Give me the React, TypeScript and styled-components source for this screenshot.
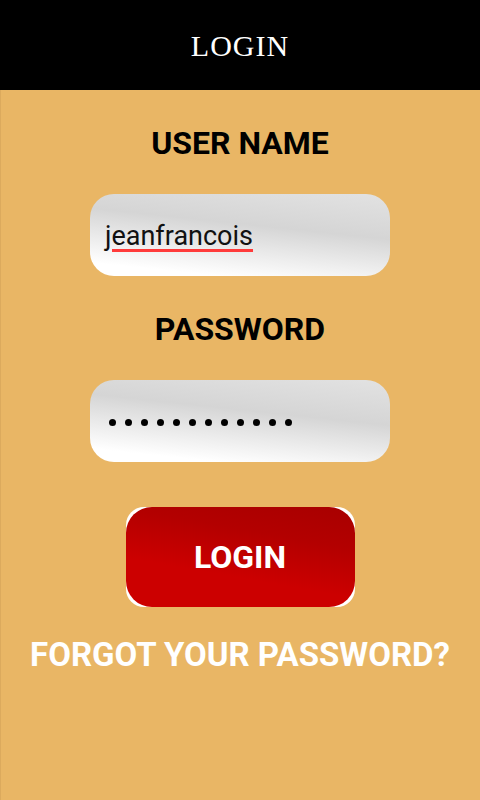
import React from "react";
import styled, { createGlobalStyle } from "styled-components";

const Global = createGlobalStyle`
  html, body { margin: 0; padding: 0; background: #e9b665; }
  body { font-family: Roboto, "Noto Sans", sans-serif; }
  * { box-sizing: border-box; }
`;

const Page = styled.div`
  width: 480px;
  height: 800px;
  display: flex;
  flex-direction: column;
  overflow: hidden;
`;

const Header = styled.header`
  height: 90px;
  background: #000;
  display: flex;
  align-items: center;
  justify-content: center;
`;

const Title = styled.h1`
  margin: 0;
  color: #fff;
  font-family: "Liberation Serif", "DejaVu Serif", serif;
  font-weight: 400;
  font-size: 30px;
  letter-spacing: 1px;
  line-height: 1;
  padding-top: 2px;
`;

const Body = styled.main`
  flex: 1;
  background: #e9b665;
  box-shadow: inset 1px 0 0 #dcaa5d;
  display: flex;
  flex-direction: column;
  align-items: center;
  padding-top: 38px;
`;

const Label = styled.div<{ $mt: number }>`
  margin-top: ${(p) => p.$mt}px;
  font-family: Roboto, sans-serif;
  font-weight: 700;
  font-size: 32px;
  line-height: 31px;
  color: #000;
`;

const Field = styled.div<{ $mt: number }>`
  margin-top: ${(p) => p.$mt}px;
  width: 300px;
  height: 82px;
  border-radius: 24px;
  background: linear-gradient(186deg, #e2e2e2 0%, #d5d5d5 40%, #ffffff 88%);
  display: flex;
  align-items: center;
  padding-left: 15px;
`;

const FieldText = styled.span`
  font-family: Roboto, sans-serif;
  font-size: 27px;
  line-height: 27px;
  color: #111;
  text-decoration: underline;
  text-decoration-color: #ff3b3b;
  text-decoration-thickness: 3px;
  text-underline-offset: 4px;
  margin-top: 2px;
`;

const Dots = styled.div`
  display: flex;
  gap: 9px;
  padding-left: 4px;
  margin-top: 2px;
`;

const Dot = styled.span`
  width: 7px;
  height: 7px;
  border-radius: 50%;
  background: #000;
`;

const ButtonFrame = styled.div`
  margin-top: 45px;
  width: 229px;
  height: 100px;
  border-radius: 18px;
  background: #fff;
  overflow: hidden;
  display: flex;
`;

const Button = styled.button`
  flex: 1;
  border: none;
  border-radius: 26px;
  background: linear-gradient(190deg, #a80000 0%, #b30000 30%, #cc0000 65%, #cc0000 100%);
  color: #fff;
  font-family: Roboto, sans-serif;
  font-weight: 700;
  font-size: 32px;
  padding: 0;
  margin: 0;
  cursor: pointer;
`;

const Forgot = styled.div`
  margin-top: 30px;
  font-family: Roboto, sans-serif;
  font-weight: 700;
  font-size: 33px;
  line-height: 35px;
  color: #fff;
  white-space: nowrap;
`;

export default function App() {
  return (
    <>
      <Global />
      <Page>
        <Header>
          <Title>LOGIN</Title>
        </Header>
        <Body>
          <Label $mt={0}>USER NAME</Label>
          <Field $mt={35}>
            <FieldText>jeanfrancois</FieldText>
          </Field>
          <Label $mt={38}>PASSWORD</Label>
          <Field $mt={35}>
            <Dots>
              {Array.from({ length: 12 }).map((_, i) => (
                <Dot key={i} />
              ))}
            </Dots>
          </Field>
          <ButtonFrame>
            <Button>LOGIN</Button>
          </ButtonFrame>
          <Forgot>FORGOT YOUR PASSWORD?</Forgot>
        </Body>
      </Page>
    </>
  );
}
